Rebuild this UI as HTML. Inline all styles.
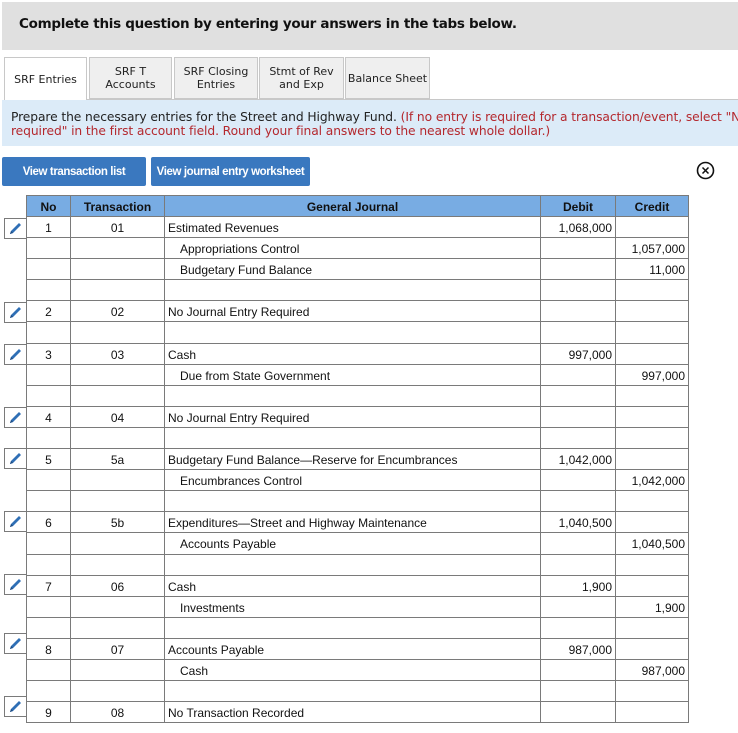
<!DOCTYPE html>
<html><head><style>
body{margin:0;background:#fff;font-family:"Liberation Sans",Arial,sans-serif;width:738px;height:733px;overflow:hidden;position:relative}
.top{position:absolute;left:2px;top:2px;width:736px;height:48px;background:#e0e0e0}
.top b{position:absolute;left:17px;top:14px;font-size:13.5px;font-family:"DejaVu Sans",sans-serif;font-weight:bold;color:#111;letter-spacing:-0.3px}
.tab{position:absolute;top:57px;height:42px;border:1px solid #c8c8c8;background:#efefef;font-family:"DejaVu Sans",sans-serif;font-size:11px;color:#222;display:flex;align-items:center;justify-content:center;text-align:center;line-height:13px;box-sizing:border-box}
.tab.act{background:#fff;height:44px;border-bottom:none}
.line{position:absolute;left:86px;right:0;top:99px;height:1px;background:#c8c8c8}
.info{position:absolute;left:2px;top:100px;width:736px;height:46px;background:#dcebf8;font-family:"DejaVu Sans",sans-serif;font-size:12.3px;line-height:14px;color:#222;padding:10px 0 0 9px;box-sizing:border-box;white-space:nowrap;overflow:hidden;letter-spacing:-0.1px}
.info span{color:#b4282e}
.btn{position:absolute;top:157px;height:29px;background:#3a78bf;color:#fff;font-size:11.5px;font-weight:bold;display:flex;align-items:center;justify-content:center;border-radius:2px;letter-spacing:-0.4px}
table{position:absolute;left:26px;top:195px;border-collapse:collapse;font-size:12px;color:#111}
td,th{border:1px solid #7a7a7a;height:18px;padding:2px 3px 0 3px;box-sizing:content-box}
tr:not(:first-child) td{height:18.1px}
th{background:#78ace3;font-weight:bold;height:19px;padding:1px 3px 0}
.c{text-align:center}.r{text-align:right}.i{padding-left:15px}
.ed{position:absolute;left:4px;width:22px;height:21px;border:1px solid #7a7a7a;border-right:none;box-sizing:border-box;background:#fff}
</style></head><body>
<div class="top"><b>Complete this question by entering your answers in the tabs below.</b></div>
<div class="line"></div>
<div class="tab act" style="left:4px;width:83px">SRF Entries</div>
<div class="tab" style="left:89px;width:83px">SRF T<br>Accounts</div>
<div class="tab" style="left:174px;width:84px">SRF Closing<br>Entries</div>
<div class="tab" style="left:259px;width:85px">Stmt of Rev<br>and Exp</div>
<div class="tab" style="left:345px;width:85px">Balance Sheet</div>
<div class="info">Prepare the necessary entries for the Street and Highway Fund. <span>(If no entry is required for a transaction/event, select "No journal entry<br>required" in the first account field. Round your final answers to the nearest whole dollar.)</span></div>
<div class="btn" style="left:2px;width:144px">View transaction list</div>
<div class="btn" style="left:151px;width:159px">View journal entry worksheet</div>
<svg style="position:absolute;left:696px;top:161px" width="19" height="19" viewBox="0 0 19 19"><circle cx="9.5" cy="9.5" r="8" fill="none" stroke="#111" stroke-width="1.6"/><path d="M6.5 6.5L12.5 12.5M12.5 6.5L6.5 12.5" stroke="#111" stroke-width="1.5"/></svg>
<table>
<tr><th style="width:37px">No</th><th style="width:87px">Transaction</th><th style="width:369px">General Journal</th><th style="width:68px">Debit</th><th style="width:66px">Credit</th></tr>
<tr><td class="c">1</td><td class="c">01</td><td>Estimated Revenues</td><td class="r">1,068,000</td><td></td></tr>
<tr><td></td><td></td><td class="i">Appropriations Control</td><td></td><td class="r">1,057,000</td></tr>
<tr><td></td><td></td><td class="i">Budgetary Fund Balance</td><td></td><td class="r">11,000</td></tr>
<tr><td></td><td></td><td></td><td></td><td></td></tr>
<tr><td class="c">2</td><td class="c">02</td><td>No Journal Entry Required</td><td></td><td></td></tr>
<tr><td></td><td></td><td></td><td></td><td></td></tr>
<tr><td class="c">3</td><td class="c">03</td><td>Cash</td><td class="r">997,000</td><td></td></tr>
<tr><td></td><td></td><td class="i">Due from State Government</td><td></td><td class="r">997,000</td></tr>
<tr><td></td><td></td><td></td><td></td><td></td></tr>
<tr><td class="c">4</td><td class="c">04</td><td>No Journal Entry Required</td><td></td><td></td></tr>
<tr><td></td><td></td><td></td><td></td><td></td></tr>
<tr><td class="c">5</td><td class="c">5a</td><td>Budgetary Fund Balance—Reserve for Encumbrances</td><td class="r">1,042,000</td><td></td></tr>
<tr><td></td><td></td><td class="i">Encumbrances Control</td><td></td><td class="r">1,042,000</td></tr>
<tr><td></td><td></td><td></td><td></td><td></td></tr>
<tr><td class="c">6</td><td class="c">5b</td><td>Expenditures—Street and Highway Maintenance</td><td class="r">1,040,500</td><td></td></tr>
<tr><td></td><td></td><td class="i">Accounts Payable</td><td></td><td class="r">1,040,500</td></tr>
<tr><td></td><td></td><td></td><td></td><td></td></tr>
<tr><td class="c">7</td><td class="c">06</td><td>Cash</td><td class="r">1,900</td><td></td></tr>
<tr><td></td><td></td><td class="i">Investments</td><td></td><td class="r">1,900</td></tr>
<tr><td></td><td></td><td></td><td></td><td></td></tr>
<tr><td class="c">8</td><td class="c">07</td><td>Accounts Payable</td><td class="r">987,000</td><td></td></tr>
<tr><td></td><td></td><td class="i">Cash</td><td></td><td class="r">987,000</td></tr>
<tr><td></td><td></td><td></td><td></td><td></td></tr>
<tr><td class="c">9</td><td class="c">08</td><td>No Transaction Recorded</td><td></td><td></td></tr>
</table>
<div id="eds"></div>
<script>
var tops=[218,302,344,407,448,511,574,633,696];var h='';
tops.forEach(function(t){h+='<div class="ed" style="top:'+t+'px"><svg width="21" height="19" viewBox="0 0 21 19" style="position:absolute;left:0;top:0"><path d="M5 15L6 12L14 4L16 6L8 14Z" fill="#2f6fb5"/><path d="M5 15L6 12L8 14Z" fill="#1c4a80"/></svg></div>';});
document.getElementById('eds').innerHTML=h;
</script>
</body></html>
